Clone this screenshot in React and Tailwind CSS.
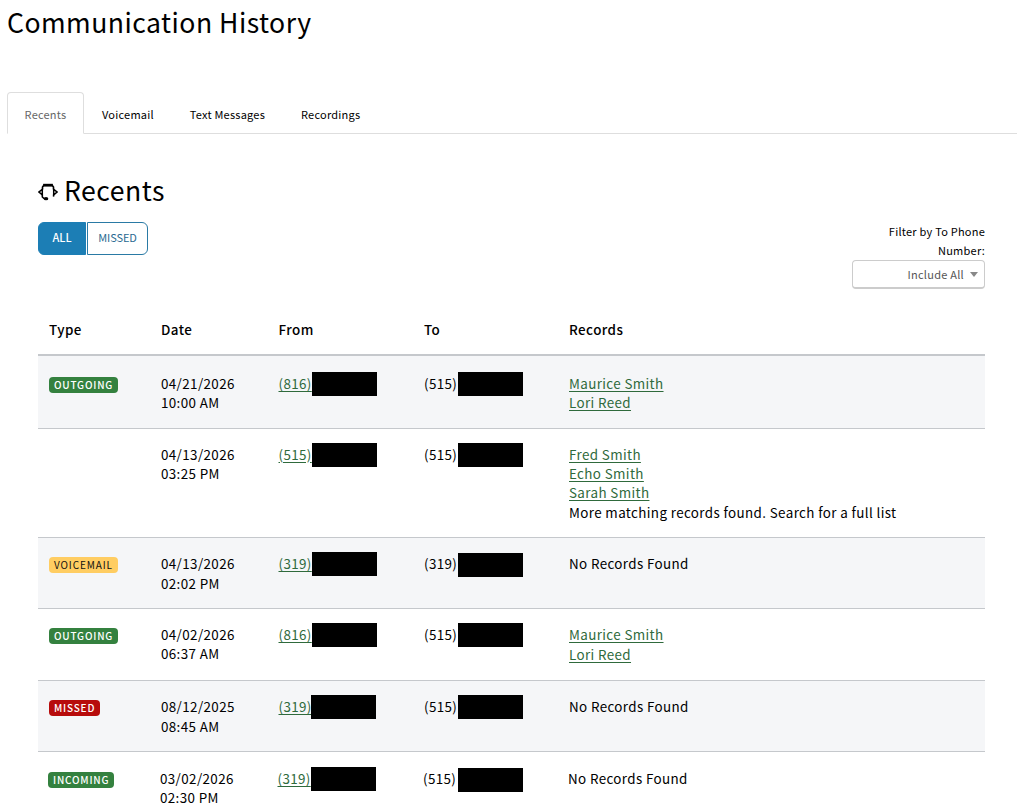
import React, { useState } from 'react';

const TABS = ['Recents', 'Voicemail', 'Text Messages', 'Recordings'];

const BADGE_STYLES = {
  OUTGOING: 'bg-[#34813f] text-white font-medium tracking-[0.8px]',
  INCOMING: 'bg-[#34813f] text-white font-medium tracking-[0.8px]',
  VOICEMAIL: 'bg-[#ffcd62] text-[#111] font-normal tracking-[0.9px]',
  MISSED: 'bg-[#b70c0c] text-white font-medium tracking-[0.8px]',
};

const CALLS = [
  { type: 'OUTGOING', date: '04/21/2026', time: '10:00 AM', from: '(816)', to: '(515)', records: ['Maurice Smith', 'Lori Reed'], row: 'h-[73px] pt-[18px] pl-[11px]' },
  { type: null, date: '04/13/2026', time: '03:25 PM', from: '(515)', to: '(515)', records: ['Fred Smith', 'Echo Smith', 'Sarah Smith'], more: true, row: 'h-[109px] pt-[15.8px] pl-[11px]' },
  { type: 'VOICEMAIL', date: '04/13/2026', time: '02:02 PM', from: '(319)', to: '(319)', records: [], row: 'h-[71px] pt-[16.3px] pl-[11px]', toBar: 'mt-[2px]' },
  { type: 'OUTGOING', date: '04/02/2026', time: '06:37 AM', from: '(816)', to: '(515)', records: ['Maurice Smith', 'Lori Reed'], row: 'h-[72px] pt-4 pl-[11px]', recordsClass: '-mt-px leading-5' },
  { type: 'MISSED', date: '08/12/2025', time: '08:45 AM', from: '(319)', to: '(515)', records: [], row: 'h-[71px] pt-[16.3px] pl-[11px]', fromWidth: 'w-[32.5px]' },
  { type: 'INCOMING', date: '03/02/2026', time: '02:30 PM', from: '(319)', to: '(515)', records: [], row: 'h-[72px] pt-[17px] pl-[10px]', toWidth: 'w-[35px]', toBar: 'mt-[2px]' },
];

const HeadsetIcon = () => (
  <svg width="20" height="18" viewBox="0 0 20 18" fill="none" stroke="black" strokeWidth="1.5" className="mt-[3px]">
    <path d="M4.5 6.5V4L6 2H14L15.5 4V6.5" strokeWidth="1.6" />
    <path d="M5.2 2.2H14.8" strokeWidth="2.8" />
    <path d="M4.3 6.4L1 9L4.3 11.8Z" />
    <path d="M15.7 6.4L19 9L15.7 11.8Z" />
    <path d="M4.3 11.5V14L6.2 15.6" />
    <path d="M15.6 11.5V13.6" />
    <ellipse cx="8" cy="15.7" rx="2.3" ry="1.6" fill="black" stroke="none" />
  </svg>
);

const Phone = ({ area, link, width = 'w-[33.5px]', bar = '' }) => (
  <div className="flex h-[19.6px] items-center">
    <span className={`shrink-0 ${width} ${link ? 'text-[#2f6a3c] underline underline-offset-2' : ''}`}>{area}</span>
    <span className={`h-6 w-[65px] shrink-0 bg-black ${bar}`}></span>
  </div>
);

const CallRow = ({ call, striped }) => (
  <div className={`grid grid-cols-[112px_117.5px_145.5px_145px_1fr] border-b border-[#c5c8cc] ${call.row} ${striped ? 'bg-[#f5f6f8]' : 'bg-white'}`}>
    <div>
      {call.type && (
        <span className={`mt-[3px] inline-block h-4 rounded px-[5px] text-[10px] leading-4 ${BADGE_STYLES[call.type]}`}>
          {call.type}
        </span>
      )}
    </div>
    <div>
      <div>{call.date}</div>
      <div>{call.time}</div>
    </div>
    <Phone area={call.from} link width={call.fromWidth} />
    <Phone area={call.to} width={call.toWidth || 'w-[34px]'} bar={call.toBar} />
    <div className={call.recordsClass}>
      {call.records.map(name => (
        <div key={name}>
          <a href="#" className="text-[#2f6a3c] underline underline-offset-2">{name}</a>
        </div>
      ))}
      {call.more && <div>More matching records found. Search for a full list</div>}
      {call.records.length === 0 && <div>No Records Found</div>}
    </div>
  </div>
);

const App = () => {
  const [tab, setTab] = useState('Recents');
  const [filter, setFilter] = useState('ALL');

  return (
    <div className="h-[804px] overflow-hidden bg-white pl-[7px] font-['Noto_Sans_CJK_JP','Noto_Sans',sans-serif] text-black">
      <h1 className="h-[42px] pt-[3px] text-[26.6px] leading-[38px] tracking-[0.47px]">Communication History</h1>

      <div className="mt-[50px] mr-[7px] flex h-[42px] border-b border-[#dedede] text-[11px]">
        {TABS.map(name => (
          <button
            key={name}
            type="button"
            onClick={() => setTab(name)}
            className={`h-[42px] border pt-[2px] tracking-[0.22px] ${
              tab === name
                ? 'rounded-t border-[#dedede] border-b-white bg-white px-[16.6px] text-[#666]'
                : 'border-transparent px-[17px]'
            }`}
          >
            {name}
          </button>
        ))}
      </div>

      <div className="ml-[31px] w-[947px] pt-[37px]">
        <h2 className="flex h-[38px] items-center gap-[6px] text-[26.6px] leading-[38px] tracking-[0.5px]">
          <HeadsetIcon />
          Recents
        </h2>

        <div className="mt-[13px] flex h-[67px] items-start justify-between">
          <div className="flex h-[33px] gap-px text-[11px]">
            <button
              type="button"
              onClick={() => setFilter('ALL')}
              className={`w-12 rounded-l-md border border-[#1c7eb5] pb-[2px] ${filter === 'ALL' ? 'bg-[#1c7eb5] font-medium text-white' : 'text-[#2a6a91]'}`}
            >
              ALL
            </button>
            <button
              type="button"
              onClick={() => setFilter('MISSED')}
              className={`w-[61px] rounded-r-md border border-[#2a7aa5] pb-[2px] tracking-[-0.1px] ${filter === 'MISSED' ? 'bg-[#1c7eb5] text-white' : 'text-[#2a6a91]'}`}
            >
              MISSED
            </button>
          </div>
          <div className="w-[133px] text-right text-[11px] leading-[19px] tracking-[0.23px]">
            <div>Filter by To Phone Number:</div>
            <button type="button" className="flex h-[29px] w-full items-center justify-end gap-[6px] rounded border border-b-2 border-[#ccc] pr-[6px] tracking-[0.25px] text-[#555]">
              Include All
              <span className="border-x-4 border-t-[5px] border-x-transparent border-t-[#888]"></span>
            </button>
          </div>
        </div>

        <div className="mt-[17px] text-[13.4px] leading-[19.3px] tracking-[0.38px]">
          <div className="grid h-[50px] grid-cols-[112px_117.5px_145.5px_145px_1fr] border-b-2 border-[#c5c8cc] pt-[14px] pl-[11px] font-medium tracking-[0.45px]">
            <div>Type</div>
            <div>Date</div>
            <div>From</div>
            <div>To</div>
            <div>Records</div>
          </div>
          {CALLS.map((call, i) => (
            <CallRow key={call.date + call.time} call={call} striped={i % 2 === 0} />
          ))}
        </div>
      </div>
    </div>
  );
};

export default App;
